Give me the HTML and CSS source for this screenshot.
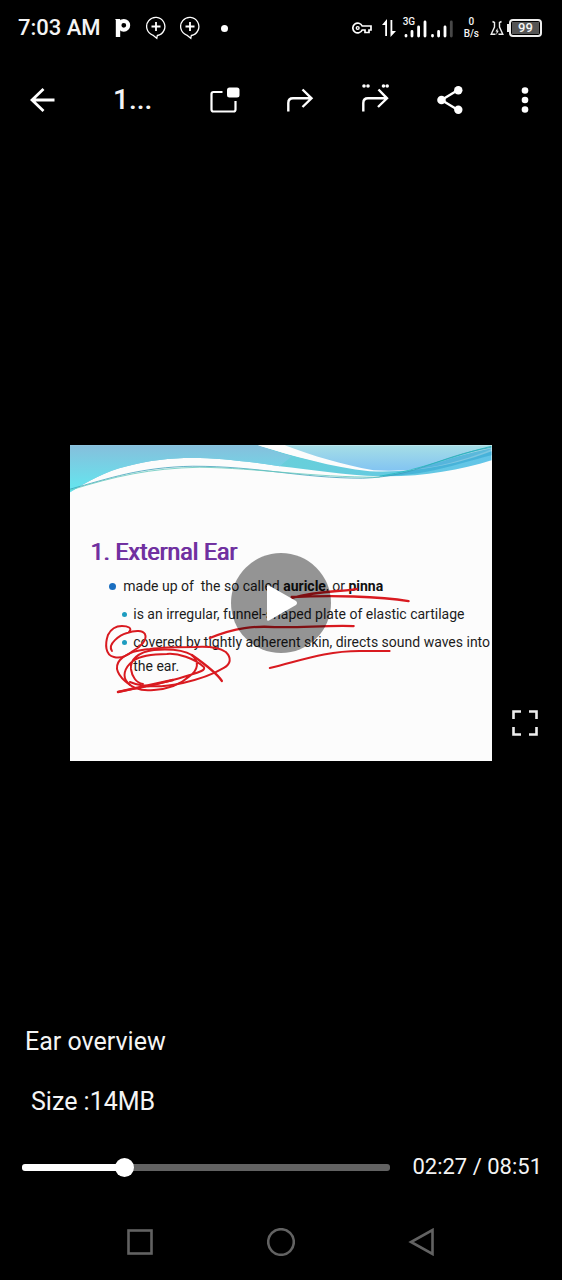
FILE: index.html
```html
<!DOCTYPE html>
<html lang="en">
<head>
<meta charset="utf-8">
<meta name="viewport" content="width=device-width, initial-scale=1">
<title>Ear overview</title>
<link rel="stylesheet" href="styles.css">
</head>
<body>
<header class="status">
  <div class="status-left">
    <span class="clock">7:03 AM</span>
    <svg class="app-p" width="16" height="20" viewBox="0 0 16 20"><path d="M3 1v18" stroke="#fff" stroke-width="4.4" fill="none"/><circle cx="8.8" cy="7.3" r="4.4" stroke="#fff" stroke-width="4" fill="none"/><path d="M0 1h3v3z" fill="#fff"/></svg>
    <svg class="bubble" width="20" height="24" viewBox="0 0 20 24"><g fill="none" stroke="#fff" stroke-width="1.3"><path d="M6.7 19.1A9.1 9.1 0 1 1 11.3 19.5l-.5 2.8-4.1-3.2"/><path d="M10 6v9M5.500 10.500h9" stroke-width="1.8"/></g></svg>
    <svg class="bubble" width="20" height="24" viewBox="0 0 20 24"><g fill="none" stroke="#fff" stroke-width="1.3"><path d="M6.7 19.1A9.1 9.1 0 1 1 11.3 19.5l-.5 2.8-4.1-3.2"/><path d="M10 6v9M5.500 10.500h9" stroke-width="1.8"/></g></svg>
    <span class="dot"></span>
  </div>
  <div class="status-right">
    <svg width="20" height="12" viewBox="0 0 20 12"><path d="M10.200 4A4.900 4.900 0 1 0 10.200 8H13v2.500h4V8h2V4z" fill="none" stroke="#fff" stroke-width="1.7"/><circle cx="5.700" cy="6" r="1.400" fill="none" stroke="#fff" stroke-width="1.400"/></svg>
    <svg class="arrows" width="14" height="18" viewBox="0 0 14 18"><path d="M5 0v17H3.200V6H0zM8.500 1h1.800v11H14L8.500 18z" fill="#fff"/></svg>
    <div class="signal">
      <svg width="50" height="20" viewBox="0 0 50 20"><g stroke="#fff" stroke-width="2.800" stroke-linecap="round"><path d="M3 18v-.5M9 18v-4.500M15.600 18V9M22 18V4M29.500 18v-.5M35.600 18v-4.500M42 18V9"/><path d="M48.300 18V4" stroke="#484848"/></g></svg>
      <span class="net">3G</span>
    </div>
    <div class="rate"><span>0</span><span>B/s</span></div>
    <svg class="flask" width="14" height="16" viewBox="0 0 14 16"><g fill="none" stroke="#eee" stroke-width="1.400"><path d="M2.500 1.500L4.500 2.500V7L1.200 14.200H5.500M11.500 1.500L9.500 2.500V7l3.300 7.200H8.500"/></g><path d="M7.600 8L5.400 11.500h1.300L6.200 15l2.600-4.300H7.500z" fill="#eee"/></svg>
    <div class="battery"><span>99</span></div>
  </div>
</header>

<nav class="toolbar" aria-label="Video actions">
  <button class="tool back" aria-label="Back"><svg width="26" height="26" viewBox="0 0 26 26"><path d="M24.500 13H2M13.500 2L2 13l11.500 11" fill="none" stroke="#fff" stroke-width="2.800"/></svg></button>
  <h1 class="title">1...</h1>
  <button class="tool" aria-label="Floating window"><svg width="30" height="28" viewBox="0 0 30 28"><path d="M12.500 6H3.500Q1.500 6 1.500 8v15.500q0 2 2 2h20q2 0 2-2V15" fill="none" stroke="#fff" stroke-width="2.200"/><rect x="17" y="1.500" width="12.500" height="10" rx="2.500" fill="#fff"/></svg></button>
  <button class="tool" aria-label="Forward"><svg width="28" height="34" viewBox="0 0 28 34"><path d="M2.300 28.500V20q0-4.700 4.700-4.700h18M16.500 6.500l9 8.800-9 8.700" fill="none" stroke="#fff" stroke-width="2.400"/></svg></button>
  <button class="tool" aria-label="Forward without quoting"><svg width="28" height="34" viewBox="0 0 28 34"><path d="M2.300 28.500V20q0-4.700 4.700-4.700h18M17.500 6.500l8.500 8.800-9 8.700" fill="none" stroke="#fff" stroke-width="2.400"/><g fill="#fff"><circle cx="3" cy="3" r="1.800"/><circle cx="7" cy="3" r="1.800"/><circle cx="22.500" cy="3" r="1.800"/><circle cx="26.200" cy="3" r="1.800"/></g></svg></button>
  <button class="tool" aria-label="Share"><svg width="26" height="28" viewBox="0 0 26 28"><path d="M21 4L4.500 14 21 24" fill="none" stroke="#fff" stroke-width="2.400"/><g fill="#fff"><circle cx="21.300" cy="4.200" r="4.200"/><circle cx="4.500" cy="14" r="4.300"/><circle cx="21.300" cy="23.800" r="4.200"/></g></svg></button>
  <button class="tool" aria-label="More options"><svg width="8" height="28" viewBox="0 0 8 28"><g fill="#fff"><circle cx="4" cy="4.500" r="3.300"/><circle cx="4" cy="14" r="3.300"/><circle cx="4" cy="23.500" r="3.300"/></g></svg></button>
</nav>

<main class="viewer">
  <section class="slide">
    <svg class="waves" viewBox="0 0 422 316" aria-hidden="true">
      <defs>
        <linearGradient id="wl" x1="0" y1="0" x2="0" y2="1"><stop offset="0" stop-color="#86bfdc"/><stop offset="1" stop-color="#62e8f0"/></linearGradient>
        <linearGradient id="wr" x1="0" y1="0" x2="0" y2="1"><stop offset="0" stop-color="#a6dee6"/><stop offset="1" stop-color="#82c4f2"/></linearGradient>
        <linearGradient id="wb" x1="0" y1="0" x2="1" y2="0"><stop offset="0" stop-color="#86c4de"/><stop offset=".55" stop-color="#67cfdb"/><stop offset="1" stop-color="#62c4e8"/></linearGradient>
      </defs>
      <path d="M0 0H188C224 11 262 22 300 26 350 28 390 18 422 6V15C390 25 350 32 310 31 275 30 240 24 210 21 150 12 105 8 57 21 36 26 18 36 0 47z" fill="url(#wb)"/>
      <path d="M0 0H188C200 4 210 8 222 11L210 21C150 12 105 8 57 21 36 26 18 36 0 47z" fill="url(#wl)"/>
      <path d="M188 0H217C245 11 270 19 304 25 262 21 224 11 188 0z" fill="#fcfcfc"/>
      <path d="M215 0H422V4C390 17 350 28 304 25 270 19 245 11 215 0z" fill="url(#wr)"/>
      <path d="M310 31C350 27 372 13 422 3V10C382 20 360 30 310 31z" fill="#39a9d2" opacity=".65"/>
      <g fill="none" stroke="#3e9fba" stroke-width=".8">
        <path d="M0 44C40 33 70 22 123 21 190 21 230 33 293 33 350 31 365 12 422 2"/>
        <path d="M0 45C45 31 80 23 130 22 190 23 240 32 310 32" stroke="#63c9bd"/>
        <path d="M310 31C355 24 380 11 422 1" stroke="#22b7bd"/>
      </g>
    </svg>
    <h2 class="slide-title">1. External Ear</h2>
    <ul class="points">
      <li class="point">made up of&nbsp; the so called <b>auricle</b>, or <b>pinna</b>
        <ul class="subpoints">
          <li class="subpoint">is an irregular, funnel-shaped plate of elastic cartilage</li>
          <li class="subpoint">covered by tightly adherent skin, directs sound waves into<br>the ear.</li>
        </ul>
      </li>
    </ul>
    <svg class="ink" viewBox="0 0 422 316" aria-hidden="true">
      <g fill="none" stroke="#d91a20" stroke-width="2" stroke-linecap="round" stroke-linejoin="round">
        <path d="M222 153C250 145 270 147 287 144M222 152C260 150 310 151 339 156" stroke-width="2.400"/>
        <path d="M140 193C166 182 185 181 205 182 230 183 255 180 284 181" stroke-width="2.300"/>
        <path d="M200 223C230 216 255 206 290 206L320 206"/>
        <path d="M42 206C37 199 50 190 57 188 65 185 73 185 75 189 78 195 70 202 63 206 57 211 51 214 44 212 35 210 35 199 38 190 41 184 46 181 52 181 58 181 63 183 59 187"/>
        <path d="M48 247C59 245 70 242 80 241 95 237 108 234 120 230 130 227 136 225 134 222 124 213 108 208 97 209 80 209 70 211 63 216 54 223 52 232 58 238 64 245 74 246 84 245 100 244 111 239 120 231 128 225 130 217 122 210 112 204 97 204 84 205 68 207 60 215 61 224 62 231 66 238 73 239"/>
        <path d="M60 240C47 231 44 222 50 215 58 207 68 205 80 204 95 202 113 202 125 202 140 201 150 203 156 207 162 213 161 219 154 223 144 229 127 235 113 238 95 242 75 243 60 237"/>
        <path d="M48 247C67 243 85 239 103 235M122 210C132 217 147 228 152 236" stroke-width="2.400"/>
      </g>
    </svg>
    <button class="play" aria-label="Play"><svg width="34" height="40" viewBox="0 0 34 40"><path d="M3 3.500v33q0 2 2 1L32 22q2-2 0-4L5 2.500q-2-1-2 1z" fill="#fff"/></svg></button>
  </section>
  <button class="expand" aria-label="Full screen"><svg width="26" height="26" viewBox="0 0 26 26"><path d="M1.500 9V1.500H9M17 1.500h7.500V9M24.500 17v7.500H17M9 24.500H1.500V17" fill="none" stroke="#eee" stroke-width="2.600"/></svg></button>
</main>

<footer class="details">
  <p class="caption">Ear overview</p>
  <p class="size">Size :14MB</p>
  <div class="progress">
    <input class="seek" type="range" min="0" max="1000" value="265" aria-label="Seek">
    <span class="time">02:27 / 08:51</span>
  </div>
</footer>

<nav class="system" aria-label="System navigation">
  <button class="key" aria-label="Recent apps"><svg width="28" height="28" viewBox="0 0 28 28"><rect x="2.500" y="2.500" width="23" height="23"/></svg></button>
  <button class="key" aria-label="Home"><svg width="28" height="28" viewBox="0 0 28 28"><circle cx="14" cy="14" r="12.800"/></svg></button>
  <button class="key" aria-label="Back"><svg width="28" height="28" viewBox="0 0 28 28"><path d="M24.500 2v24L3 14z"/></svg></button>
</nav>
</body>
</html>
```
FILE: styles.css
```css
* { box-sizing: border-box; }
body {
  margin: 0;
  min-height: 100vh;
  display: flex;
  flex-direction: column;
  background: #000;
  color: #f4f4f4;
  font-family: Roboto, "Liberation Sans", sans-serif;
}
button { padding: 0; border: 0; background: none; color: inherit; font: inherit; }
svg { display: block; flex: none; }
h1, h2, p, ul { margin: 0; padding: 0; }
ul { list-style: none; }

.status {
  height: 56px;
  padding: 0 20px 0 18px;
  display: flex;
  align-items: center;
  justify-content: space-between;
}
.status-left, .status-right { display: flex; align-items: center; }
.clock { font-size: 22px; line-height: 30px; font-weight: 500; }
.app-p { margin-left: 14px; }
.bubble { margin-left: 14px; }
.app-p + .bubble { margin-left: 15px; }
.dot { width: 7px; height: 7px; margin-left: 21px; border-radius: 50%; background: #fff; }
.arrows { margin-left: 10px; }
.signal { position: relative; margin-left: 7px; }
.net { position: absolute; left: 0; top: -2px; font-size: 10px; line-height: 12px; font-weight: 500; }
.rate {
  margin-left: 11px;
  display: flex;
  flex-direction: column;
  align-items: center;
  font-size: 10px;
  line-height: 12px;
  font-weight: 500;
}
.flask { margin-left: 11px; }
.battery {
  position: relative;
  width: 33px;
  height: 18px;
  margin-left: 5px;
  padding: 1px;
  border: 2px solid #eee;
  border-radius: 4px;
}
.battery::before {
  content: "";
  position: absolute;
  left: -4px;
  top: 3px;
  width: 2px;
  height: 8px;
  background: #eee;
}
.battery span {
  display: block;
  background: #555;
  font-size: 13px;
  line-height: 12px;
  font-weight: 500;
  text-align: center;
}

.toolbar { height: 88px; display: flex; align-items: center; }
.tool { width: 75px; height: 75px; flex: none; display: flex; align-items: center; justify-content: center; }
.back { width: 86px; }
.title { flex: 1; padding-left: 27px; font-size: 28px; line-height: 36px; font-weight: 500; }

.viewer {
  flex: 1;
  padding-top: 38px;
  display: grid;
  grid-template-columns: 1fr 6fr 1fr;
  align-content: center;
}
.slide {
  grid-column: 2;
  position: relative;
  aspect-ratio: 4 / 3;
  padding: 94px 0 0 20px;
  overflow: hidden;
  background: #fcfcfc;
  color: #1c1c1c;
  white-space: nowrap;
}
.waves, .ink { position: absolute; inset: 0; width: 100%; height: 100%; }
.slide-title {
  font-size: 23px;
  line-height: 28px;
  font-weight: 400;
  color: #7030a0;
  text-shadow: 1px 0 #7030a0;
}
.points { padding: 5px 0 0 33px; font-size: 14px; line-height: 28px; }
.points b { font-weight: 700; color: #111; }
.point, .subpoint { position: relative; }
.subpoints { padding-left: 10px; }
.subpoint { padding: 2px 0; line-height: 24px; }
.point::before, .subpoint::before {
  content: "";
  position: absolute;
  left: -14px;
  top: 11px;
  width: 7px;
  height: 7px;
  border-radius: 50%;
  background: #1a6ec0;
}
.subpoint::before { left: -11px; top: 12px; width: 5px; height: 5px; background: #1e9cc0; }
.play {
  position: absolute;
  inset: 0;
  margin: auto;
  width: 100px;
  height: 100px;
  border-radius: 50%;
  background: rgba(0, 0, 0, .41);
  display: flex;
  align-items: center;
  justify-content: center;
}
.expand { justify-self: start; align-self: end; margin: 0 0 25px 20px; }

.details { padding: 0 20px 0 22px; font-size: 25px; line-height: 36px; }
.caption { padding-left: 3px; }
.size { padding: 24px 0 0 9px; }
.progress { padding-top: 29px; display: flex; align-items: center; gap: 22px; }
.time { font-size: 22px; line-height: 36px; white-space: nowrap; }
.seek {
  -webkit-appearance: none;
  appearance: none;
  flex: 1;
  min-width: 0;
  height: 19px;
  margin: 0;
  background: transparent;
}
.seek::-webkit-slider-runnable-track {
  height: 7px;
  border-radius: 3px;
  background: linear-gradient(to right, #fff 28%, #626262 28%);
}
.seek::-webkit-slider-thumb {
  -webkit-appearance: none;
  width: 19px;
  height: 19px;
  margin-top: -6px;
  border-radius: 50%;
  background: #fff;
}

.system { height: 95px; padding: 19px 70px 0; display: flex; align-items: center; }
.key { flex: 1; display: flex; justify-content: center; }
.key svg { fill: none; stroke: #626262; stroke-width: 2.600px; }
```
